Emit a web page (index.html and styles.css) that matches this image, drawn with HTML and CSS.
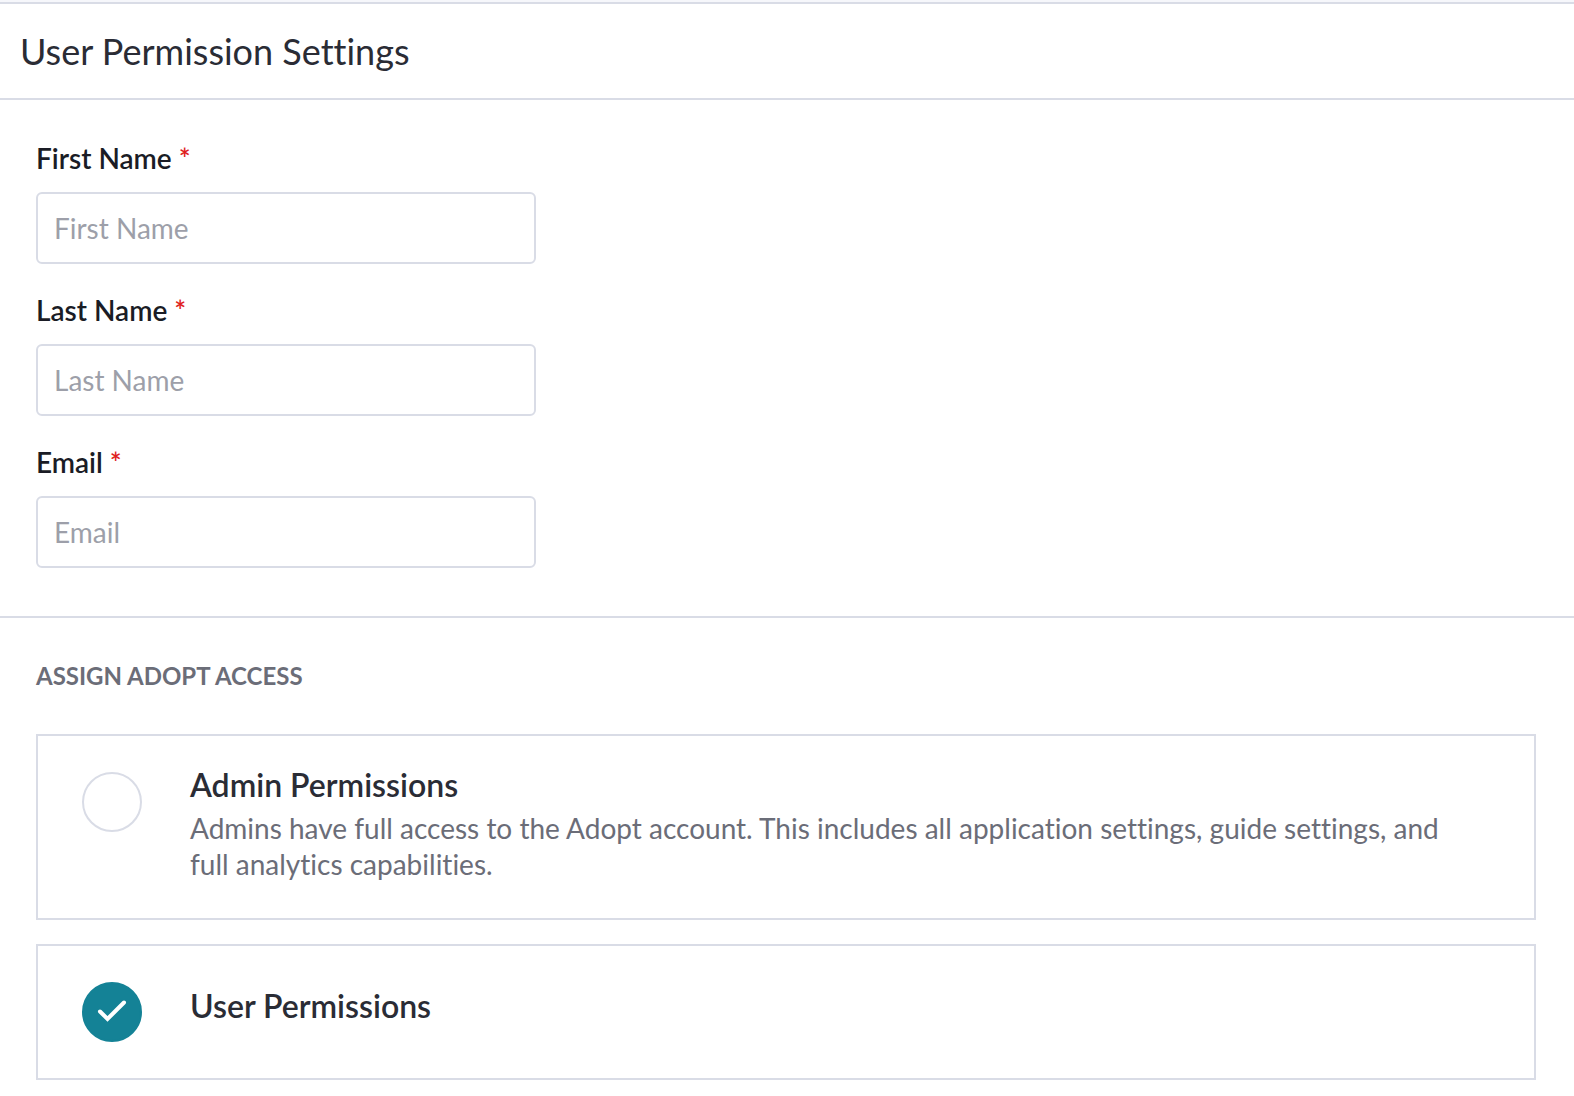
FILE: index.html
```html
<!DOCTYPE html>
<html lang="en">
<head>
<meta charset="utf-8">
<meta name="viewport" content="width=device-width, initial-scale=1">
<title>User Permission Settings</title>
<link rel="stylesheet" href="styles.css">
</head>
<body>
<main class="panel">
  <header class="panel-header">
    <h1 class="panel-title">User Permission Settings</h1>
  </header>
  <form>
    <section class="fields">
      <div class="field">
        <label class="field-label" for="first-name">First Name <span class="required">*</span></label>
        <input class="field-input" id="first-name" type="text" placeholder="First Name" required>
      </div>
      <div class="field">
        <label class="field-label" for="last-name">Last Name <span class="required">*</span></label>
        <input class="field-input" id="last-name" type="text" placeholder="Last Name" required>
      </div>
      <div class="field">
        <label class="field-label" for="email">Email <span class="required">*</span></label>
        <input class="field-input" id="email" type="email" placeholder="Email" required>
      </div>
    </section>
    <section class="access">
      <h2 class="access-title">ASSIGN ADOPT ACCESS</h2>
      <div class="options">
        <label class="option">
          <span class="radio">
            <input class="radio-input" type="radio" name="access" value="admin">
            <svg class="radio-check" viewBox="0 0 60 60" aria-hidden="true"><path d="M18 29.5 25.5 37 42 20.5"/></svg>
          </span>
          <span class="option-text">
            <span class="option-title">Admin Permissions</span>
            <span class="option-description">Admins have full access to the Adopt account. This includes all application settings, guide settings, and full analytics capabilities.</span>
          </span>
        </label>
        <label class="option">
          <span class="radio">
            <input class="radio-input" type="radio" name="access" value="user" checked>
            <svg class="radio-check" viewBox="0 0 60 60" aria-hidden="true"><path d="M18 29.5 25.5 37 42 20.5"/></svg>
          </span>
          <span class="option-text option-text-centered">
            <span class="option-title">User Permissions</span>
          </span>
        </label>
      </div>
    </section>
  </form>
</main>
</body>
</html>
```
FILE: styles.css
```css
* {
  box-sizing: border-box;
}

body {
  margin: 0;
  padding-top: 2px;
  background: #f6f7fb;
  color: #2a2c35;
  font-family: Lato, "Open Sans", sans-serif;
  font-variant-ligatures: none;
}

.panel {
  border-top: 2px solid #d9dce6;
  background: #fff;
  min-height: calc(100vh - 2px);
}

.panel-header {
  padding: 25px 20px;
  border-bottom: 2px solid #d9dce6;
}

.panel-title {
  margin: 0;
  font-size: 36px;
  line-height: 44px;
  font-weight: 400;
}

.fields {
  display: flex;
  flex-direction: column;
  gap: 28px;
  padding: 40px 36px 48px;
  border-bottom: 2px solid #d9dce6;
}

.field {
  display: flex;
  flex-direction: column;
  gap: 16px;
  max-width: 500px;
}

.field-label {
  color: #1a1c25;
  font-size: 28px;
  line-height: 36px;
  font-weight: 600;
}

.required {
  color: #e01f1f;
}

.field-input {
  width: 100%;
  height: 72px;
  padding: 0 16px;
  border: 2px solid #d9dce6;
  border-radius: 6px;
  background: #fff;
  color: #2a2c35;
  font: inherit;
  font-size: 28px;
}

.field-input::placeholder {
  color: #9d9fa9;
}

.access {
  padding: 43px 38px 16px 36px;
}

.access-title {
  margin: 0 0 43px;
  color: #6b6d78;
  font-size: 24px;
  line-height: 30px;
  font-weight: 700;
}

.options {
  display: flex;
  flex-direction: column;
  gap: 24px;
}

.option {
  display: flex;
  gap: 48px;
  padding: 30px 60px 36px 44px;
  border: 2px solid #d9dce6;
  cursor: pointer;
}

.radio {
  display: grid;
  flex: none;
  align-self: flex-start;
  width: 60px;
  height: 60px;
  margin-top: 6px;
}

.radio-input,
.radio-check {
  grid-area: 1 / 1;
  width: 60px;
  height: 60px;
}

.radio-input {
  appearance: none;
  margin: 0;
  border: 2px solid #d9dce6;
  border-radius: 50%;
  background: #fff;
}

.radio-input:checked {
  border-color: #148296;
  background: #148296;
}

.radio-check {
  display: none;
  fill: none;
  stroke: #fff;
  stroke-width: 4;
  stroke-linecap: round;
  pointer-events: none;
}

.radio-input:checked + .radio-check {
  display: block;
}

.option-text {
  flex: 1;
  min-width: 0;
}

.option-text-centered {
  align-self: center;
}

.option-title,
.option-description {
  display: block;
}

.option-title {
  margin-bottom: 6px;
  font-size: 32px;
  line-height: 38px;
  font-weight: 600;
}

.option-description {
  color: #6b6d78;
  font-size: 28px;
  line-height: 36px;
}
```
